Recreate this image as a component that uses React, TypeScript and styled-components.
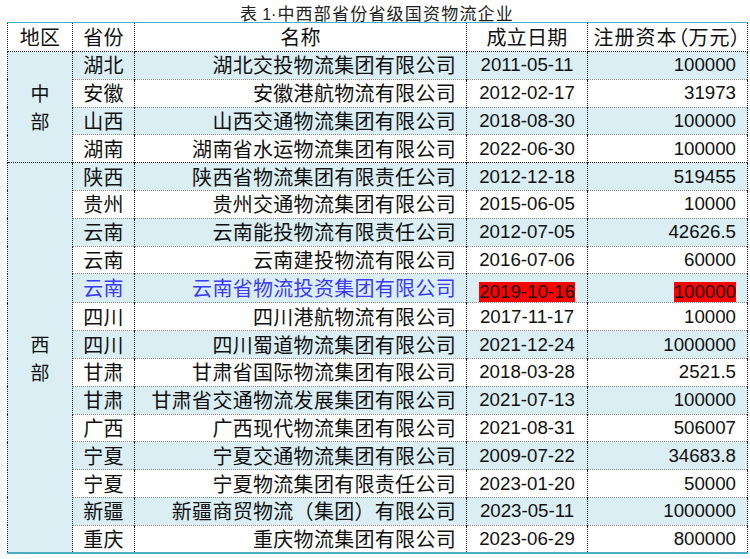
import React from "react";
import styled, { createGlobalStyle, css } from "styled-components";

const GlobalStyle = createGlobalStyle`
  html, body { margin: 0; padding: 0; background: #ffffff; }
  body { font-family: "Noto Sans CJK SC", "Liberation Sans", sans-serif; color: #111; }
`;

const TEAL = "#4bacc6";
const SHADE = "#daeef3";

type Row = {
  prov: string;
  name: string;
  date: string;
  cap: string;
  highlight?: boolean;
};

type Group = { region: string; rows: Row[] };

const groups: Group[] = [
  {
    region: "中部",
    rows: [
      { prov: "湖北", name: "湖北交投物流集团有限公司", date: "2011-05-11", cap: "100000" },
      { prov: "安徽", name: "安徽港航物流有限公司", date: "2012-02-17", cap: "31973" },
      { prov: "山西", name: "山西交通物流集团有限公司", date: "2018-08-30", cap: "100000" },
      { prov: "湖南", name: "湖南省水运物流集团有限公司", date: "2022-06-30", cap: "100000" },
    ],
  },
  {
    region: "西部",
    rows: [
      { prov: "陕西", name: "陕西省物流集团有限责任公司", date: "2012-12-18", cap: "519455" },
      { prov: "贵州", name: "贵州交通物流集团有限公司", date: "2015-06-05", cap: "10000" },
      { prov: "云南", name: "云南能投物流有限责任公司", date: "2012-07-05", cap: "42626.5" },
      { prov: "云南", name: "云南建投物流有限公司", date: "2016-07-06", cap: "60000" },
      { prov: "云南", name: "云南省物流投资集团有限公司", date: "2019-10-16", cap: "100000", highlight: true },
      { prov: "四川", name: "四川港航物流有限公司", date: "2017-11-17", cap: "10000" },
      { prov: "四川", name: "四川蜀道物流集团有限公司", date: "2021-12-24", cap: "1000000" },
      { prov: "甘肃", name: "甘肃省国际物流集团有限公司", date: "2018-03-28", cap: "2521.5" },
      { prov: "甘肃", name: "甘肃省交通物流发展集团有限公司", date: "2021-07-13", cap: "100000" },
      { prov: "广西", name: "广西现代物流集团有限公司", date: "2021-08-31", cap: "506007" },
      { prov: "宁夏", name: "宁夏交通物流集团有限公司", date: "2009-07-22", cap: "34683.8" },
      { prov: "宁夏", name: "宁夏物流集团有限责任公司", date: "2023-01-20", cap: "50000" },
      { prov: "新疆", name: "新疆商贸物流（集团）有限公司", date: "2023-05-11", cap: "1000000" },
      { prov: "重庆", name: "重庆物流集团有限公司", date: "2023-06-29", cap: "800000" },
    ],
  },
];

const Page = styled.div`
  width: 740px;
  padding: 0 0 0 7px;
`;

const Title = styled.div`
  height: 19px;
  padding-top: 3px;
  line-height: 19px;
  text-align: center;
  font-size: 17px;
  letter-spacing: 1.2px;
  color: #222;
  white-space: nowrap;
`;

const TitleNum = styled.span`
  font-family: "Liberation Sans", sans-serif;
  font-size: 16px;
  letter-spacing: 0;
  margin: 0 1px 0 4px;
`;

const Table = styled.table`
  width: 740px;
  border-collapse: collapse;
  table-layout: fixed;
  border-top: 1px solid ${TEAL};
  border-bottom: 2px solid ${TEAL};
`;

const Col = styled.col<{ $w: number }>`
  width: ${(p) => p.$w}px;
`;

const HeadRow = styled.tr`
  height: 29px;
  background: #ffffff;
`;

const BodyRow = styled.tr<{ $shade: boolean; $groupStart: boolean }>`
  height: 27.8px;
  background: ${(p) => (p.$shade ? SHADE : "#ffffff")};
  ${(p) =>
    p.$groupStart &&
    css`
      & > td {
        border-top: 1px dotted #222;
      }
    `}
`;

const cellBase = css`
  padding: 0;
  border-left: 1px dotted #222;
  border-right: 1px dotted #222;
  white-space: nowrap;
  overflow: visible;
  vertical-align: middle;
`;

const Th = styled.th`
  ${cellBase};
  font-weight: 400;
  font-size: 20px;
  line-height: 26px;
  letter-spacing: 0.3px;
  text-align: center;
  border-bottom: 1px dotted #222;
  color: #111;
`;

const CapHead = styled(Th)`
  font-feature-settings: "palt";
  letter-spacing: 1px;
`;

const RegionCell = styled.td`
  ${cellBase};
  background: ${SHADE};
  text-align: center;
  font-size: 19px;
  line-height: 28px;
  color: #111;
  border-top: 1px dotted #222;
`;

const Td = styled.td<{ $align: "left" | "center" | "right"; $num?: boolean; $blue?: boolean }>`
  ${cellBase};
  border-top: 1px dotted #8a8a8a;
  text-align: ${(p) => p.$align};
  padding-right: ${(p) => (p.$align === "right" ? (p.$num ? "11px" : "10px") : "0")};
  color: ${(p) => (p.$blue ? "#3b3bf4" : "#111")};
  font-family: ${(p) =>
    p.$num ? `"Liberation Sans", "Noto Sans CJK SC", sans-serif` : `"Noto Sans CJK SC", sans-serif`};
  font-size: ${(p) => (p.$num ? "18.7px" : "20px")};
  letter-spacing: ${(p) => (p.$num ? "0" : "0.3px")};
  line-height: 26px;
`;

const Mark = styled.span`
  display: inline-block;
  background: #ff0000;
  color: #111;
  line-height: 20px;
  vertical-align: -5px;
`;

export default function App() {
  let idx = 0;
  return (
    <Page>
      <GlobalStyle />
      <Title>
        表<TitleNum>1·</TitleNum>中西部省份省级国资物流企业
      </Title>
      <Table>
        <colgroup>
          <Col $w={65} />
          <Col $w={62} />
          <Col $w={332} />
          <Col $w={121} />
          <Col $w={160} />
        </colgroup>
        <thead>
          <HeadRow>
            <Th>地区</Th>
            <Th>省份</Th>
            <Th>名称</Th>
            <Th>成立日期</Th>
            <CapHead>注册资本（万元）</CapHead>
          </HeadRow>
        </thead>
        <tbody>
          {groups.map((g) =>
            g.rows.map((r, i) => {
              const shade = idx % 2 === 0;
              idx += 1;
              return (
                <BodyRow key={`${g.region}-${i}`} $shade={shade} $groupStart={i === 0}>
                  {i === 0 && (
                    <RegionCell rowSpan={g.rows.length}>
                      {g.region[0]}
                      <br />
                      {g.region[1]}
                    </RegionCell>
                  )}
                  <Td $align="center" $blue={r.highlight}>
                    {r.prov}
                  </Td>
                  <Td $align="right" $blue={r.highlight}>
                    {r.name}
                  </Td>
                  <Td $align="center" $num>
                    {r.highlight ? <Mark>{r.date}</Mark> : r.date}
                  </Td>
                  <Td $align="right" $num>
                    {r.highlight ? <Mark>{r.cap}</Mark> : r.cap}
                  </Td>
                </BodyRow>
              );
            })
          )}
        </tbody>
      </Table>
    </Page>
  );
}
